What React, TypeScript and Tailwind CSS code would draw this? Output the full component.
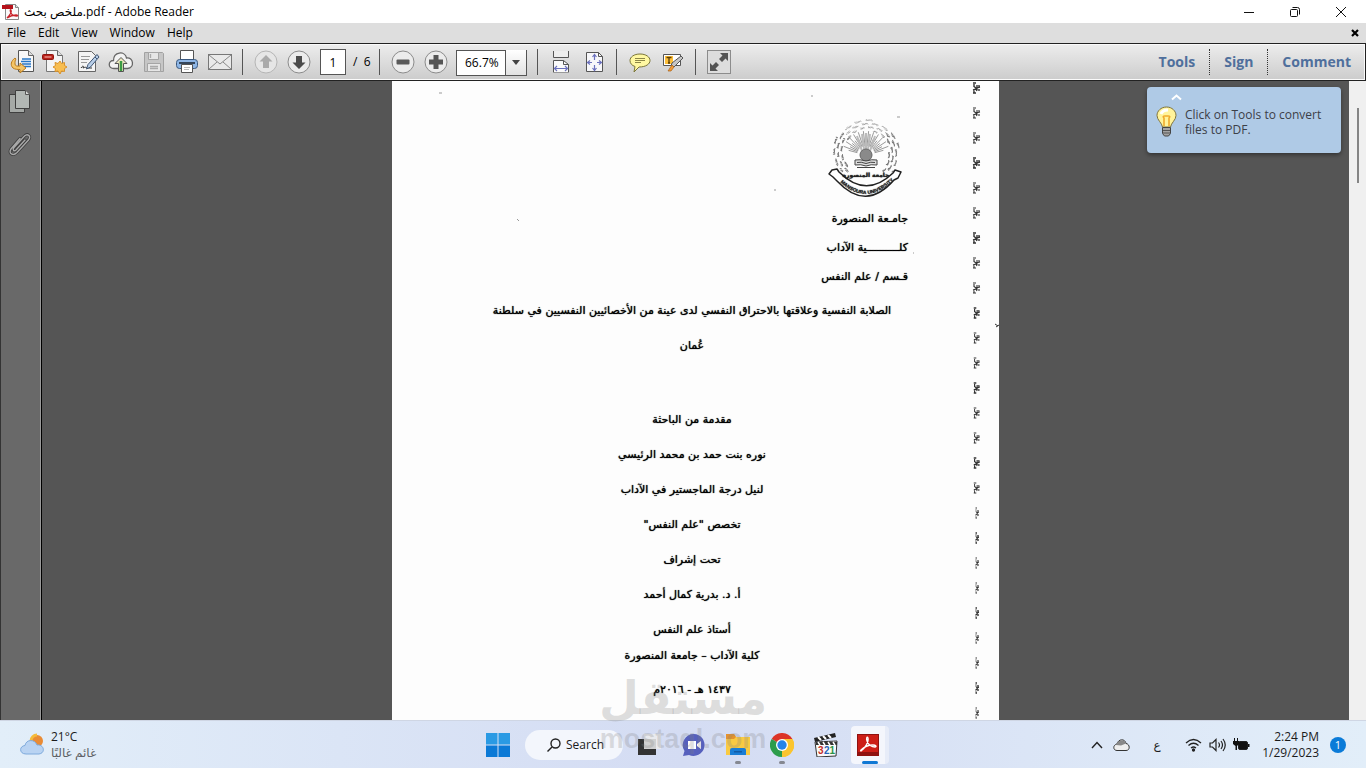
import type { ReactNode } from "react";

const UI = "font-['Open_Sans','DejaVu_Sans',sans-serif]";

function Sep() {
  return <span className="mx-[6px] h-[26px] w-px shrink-0 bg-[#555]" />;
}

function Tool({ label, children }: { label: string; children: ReactNode }) {
  return (
    <button type="button" aria-label={label} className="flex h-[30px] w-[33px] shrink-0 items-center justify-center">
      <svg width="26" height="26" viewBox="0 0 26 26" fill="none" aria-hidden="true">
        {children}
      </svg>
    </button>
  );
}

function PdfIcon() {
  return (
    <svg width="18" height="18" viewBox="0 0 18 18" aria-hidden="true">
      <path d="M3.5 1.5h10l3 3v12h-13z" fill="#fafafa" stroke="#888" />
      <path d="M13.5 1.5v3h3" fill="#ddd" stroke="#888" />
      <path d="M0 2h11v4H0z" fill="#b5121b" />
      <path d="M5 15c3-3 5-6 4-8-1-1-1 1 0 3 1 2 3 3 6 3 1 0 1-1-1-1-3 0-6 1-9 3z" fill="none" stroke="#c8232a" strokeWidth="1.3" />
    </svg>
  );
}

function TitleBar() {
  return (
    <header className="flex h-[23px] shrink-0 items-center justify-between bg-white pr-[2px] pl-[2px] text-[12px] text-black">
      <div className="flex items-center gap-[4px]">
        <PdfIcon />
        <h1 className="whitespace-nowrap">ملخص بحث.pdf - Adobe Reader</h1>
      </div>
      <div className="flex">
        <button type="button" aria-label="Minimize" className="flex h-[21px] w-[46px] items-center justify-center">
          <svg width="12" height="12" viewBox="0 0 12 12"><path d="M1 6.5h10" stroke="#111" /></svg>
        </button>
        <button type="button" aria-label="Restore" className="flex h-[21px] w-[46px] items-center justify-center">
          <svg width="12" height="12" viewBox="0 0 12 12" fill="none" stroke="#111">
            <rect x="1.5" y="3.5" width="7" height="7" rx="1" />
            <path d="M3.5 1.5h5a2 2 0 0 1 2 2v5" />
          </svg>
        </button>
        <button type="button" aria-label="Close" className="flex h-[21px] w-[46px] items-center justify-center">
          <svg width="12" height="12" viewBox="0 0 12 12"><path d="M1 1l10 10M11 1L1 11" stroke="#111" /></svg>
        </button>
      </div>
    </header>
  );
}

function MenuBar() {
  return (
    <nav className="flex h-[20px] shrink-0 items-center justify-between bg-[#dedede] pr-[6px] text-[12px] text-black">
      <div className="flex items-center pl-px">
        {["File", "Edit", "View", "Window", "Help"].map((m) => (
          <button key={m} type="button" className="px-[6px] leading-[20px]">{m}</button>
        ))}
      </div>
      <button type="button" aria-label="Close document" className="flex h-[16px] w-[10px] items-center justify-center">
        <svg width="8" height="8" viewBox="0 0 8 8"><path d="M1 1l6 6M7 1L1 7" stroke="#000" strokeWidth="2.2" /></svg>
      </button>
    </nav>
  );
}

function Toolbar() {
  return (
    <div className="flex h-[38px] shrink-0 items-center justify-between border border-[#222] border-b-[#222] bg-gradient-to-b from-[#ededed] to-[#cccccc] shadow-[inset_0_0_0_1px_#fafafa]">
      <div className="flex items-center pl-[4px]">
        <Tool label="Open">
          <path d="M9.500 1.500h10l5 5v16h-15z" fill="#f8f8f8" stroke="#555" />
          <path d="M19.500 1.500v5h5" fill="#ddd" stroke="#666" />
          <path d="M13 10h9M12 12.500h10M13 15h9M14 17.500h8" stroke="#2877c6" strokeWidth="1.400" />
          <path d="M6 9c-4 3-5 7-2 10 2 1.500 5 1.500 7 1.500V24l6-5-6-5v3c-3 .3-5 0-5-2 0-2 0-4 1-5z" fill="#f5c566" stroke="#bb7b1e" />
        </Tool>
        <Tool label="Create PDF">
          <path d="M4.500 1.500h11l5 5v16h-16z" fill="#f4f4f4" stroke="#777" />
          <path d="M15.500 1.500v5h5" fill="#ddd" stroke="#666" />
          <rect x="0.500" y="5.500" width="11" height="5" rx="1" fill="#b92019" stroke="#8e1610" />
          <path d="M2.500 8h7" stroke="#f3a9a0" strokeWidth="1.200" />
          <path d="M18 12l1.500 2.500 3-1 0 3 2.500 1.500-2.500 1.500 0 3-3-.5L18 25l-2-3-3 .5.500-3-2.500-1.500 2.500-1.500-.5-3 3 1z" fill="#f8bd4f" stroke="#d9922a" />
        </Tool>
        <Tool label="Fill and sign">
          <path d="M3.500 2.500h13l4 4v16h-17z" fill="#f4f4f4" stroke="#666" />
          <path d="M6 7.500h9M6 10.500h8M6 13.500h6" stroke="#999" strokeWidth="1.200" />
          <path d="M6 19c2-3 3-2 2 0 2-1 3-1 4 0h5" stroke="#333" />
          <path d="M22 5.500l2 2.500L15.500 18l-4 2 1.500-4.500z" fill="#b8cee8" stroke="#3f5573" />
          <path d="M20 8l2 2" stroke="#3f5573" />
        </Tool>
        <Tool label="Upload">
          <path d="M6 19.500C-.5 19.500 0 11.500 5.500 11.500 5.500 2.500 17 1.500 18.500 9c7-1 8.500 9.500 1 10.500z" fill="#f3f3f3" stroke="#666" strokeWidth="1.300" />
          <path d="M13 8.500l6 6h-3.500v8h-5v-8H7z" fill="#eee8c0" stroke="#555" />
          <path d="M13 12v10" stroke="#3b9b43" strokeWidth="2.500" />
        </Tool>
        <Tool label="Save">
          <path d="M3.500 3.500h18l1 1v18h-19z" fill="#c6c6c6" stroke="#a2a2a2" />
          <path d="M7.500 3.500h10v7h-10zM6.500 14.500h13v8h-13z" fill="#e6e6e6" stroke="#a5a5a5" />
          <path d="M9.500 5v4M9 17.500h8M9 19.500h8" stroke="#aaa" strokeWidth="1.300" />
        </Tool>
        <Tool label="Print">
          <path d="M6.500 1.500h13v10h-13z" fill="#fff" stroke="#555" />
          <rect x="2.500" y="10.500" width="21" height="9" rx="3" fill="#8eb6e6" stroke="#39587f" />
          <path d="M5 14h16" stroke="#35465b" strokeWidth="2" />
          <path d="M7.500 15.500h11v8h-11z" fill="#fff" stroke="#555" />
          <path d="M10 18.500h6M10 20.500h5" stroke="#bbb" />
        </Tool>
        <Tool label="Email">
          <rect x="1.500" y="5.500" width="23" height="15" fill="#e9e9e9" stroke="#777" />
          <path d="M2 6l11 9L24 6M2 20l8-7M24 20l-8-7" stroke="#888" />
        </Tool>
        <Sep />
        <Tool label="Previous page">
          <circle cx="13" cy="13" r="11" fill="#e6e6e6" stroke="#b5b5b5" />
          <path d="M13 6l6.500 6.500H16V19h-6v-6.500H6.500z" fill="#aaa" />
        </Tool>
        <Tool label="Next page">
          <circle cx="13" cy="13" r="11" fill="#ececec" stroke="#8b8b8b" />
          <path d="M13 20l6.500-6.500H16V7h-6v6.500H6.500z" fill="#4c4c4c" />
        </Tool>
        <input aria-label="Page number" defaultValue="1" className="ml-[5px] h-[26px] w-[26px] shrink-0 border border-[#555] bg-white text-center text-[12px] text-black" />
        <span className="w-[27px] shrink-0 pl-[7px] text-[12px] whitespace-pre text-black">/  6</span>
        <Sep />
        <Tool label="Zoom out">
          <circle cx="13" cy="13" r="11" fill="#ececec" stroke="#8b8b8b" />
          <rect x="6.500" y="10.500" width="13" height="5" rx="1" fill="#5a5a5a" />
        </Tool>
        <Tool label="Zoom in">
          <circle cx="13" cy="13" r="11" fill="#ececec" stroke="#8b8b8b" />
          <path d="M10.500 6h5v4.500H20v5h-4.500V20h-5v-4.500H6v-5h4.500z" fill="#555" />
        </Tool>
        <div className="relative mr-[4px] ml-[4px] shrink-0">
          <select aria-label="Zoom" className="h-[26px] w-[71px] appearance-none border border-[#555] bg-white pl-[8px] text-[12px] text-black">
            <option>66.7%</option>
            <option>100%</option>
          </select>
          <span className="pointer-events-none absolute inset-y-px right-px flex w-[21px] items-center justify-center border-l border-[#555] bg-gradient-to-b from-white to-[#e2e2e2]">
            <svg width="8" height="5" viewBox="0 0 8 5"><path d="M0 0h8L4 5z" fill="#444" /></svg>
          </span>
        </div>
        <Sep />
        <Tool label="Fit width">
          <path d="M5.500 2v6.500h15V2" fill="#eee" stroke="#555" />
          <path d="M5.500 23V11.500h10l5 4V23" fill="#fafafa" stroke="#555" />
          <path d="M15.500 11.500v4h5" stroke="#555" />
          <path d="M6.500 19.500h13M9 17l-2.500 2.500L9 22M17 17l2.500 2.500L17 22" stroke="#6b71bd" strokeWidth="1.200" />
          <path d="M5 23.500h16" stroke="#999" />
        </Tool>
        <Tool label="Fit page">
          <path d="M5.500 3.500h12l4 4v15h-16z" fill="#f7f7fa" stroke="#555" />
          <path d="M17.500 3.500v4h4" stroke="#555" />
          <path d="M7 13.500h4M16 13.500h4M13.500 6v5M13.500 16v5M9 11.500l-2.500 2L9 15.500M18 11.500l2.500 2-2.500 2M11.500 8l2-2.500 2 2.500M11.500 19l2 2.500 2-2.500" stroke="#6b71bd" strokeWidth="1.200" />
        </Tool>
        <Sep />
        <Tool label="Add note">
          <path d="M13 5c6 0 10 3 10 6.500S19 18 12 18l-5 5 1-5.500c-3-1-5-3-5-6C3 8 7 5 13 5z" fill="#fff8a2" stroke="#7b7637" />
          <path d="M8 9.500h10M8 11.500h10M8 13.500h6" stroke="#8c8648" />
        </Tool>
        <Tool label="Highlight text">
          <path d="M3.500 5.500h17v11h-17z" fill="#fff" stroke="#555" />
          <path d="M5 7h8v8H5z" fill="#fcbf3b" />
          <path d="M6.500 8.500h5M9 8.500v5.500M8 14h2" stroke="#5c3d05" strokeWidth="1.300" />
          <path d="M21 7l2 2-9 9-3-1 1-3z" fill="#c6c6c6" stroke="#555" />
          <path d="M12 16l2 2-3 4H8z" fill="#f29b36" stroke="#a96014" strokeWidth=".7" />
        </Tool>
        <Sep />
        <Tool label="Read mode">
          <rect x="1.500" y="1.500" width="23" height="23" fill="#ddd" stroke="#8c8c8c" />
          <path d="M22 4v8l-2.500-2.500-3.500 3.500-3-3 3.500-3.500L14 4zM4 22v-8l2.500 2.500L10 13l3 3-3.500 3.500L12 22z" fill="#555" />
        </Tool>
      </div>
      <div className="flex items-center text-[14px] font-bold text-[#4f6f9c] [text-shadow:0_1px_0_#fff]">
        <button type="button" className="px-[14px] leading-[26px]">Tools</button>
        <button type="button" className="border-l border-dotted border-[#333] px-[14px] leading-[26px]">Sign</button>
        <button type="button" className="border-l border-dotted border-[#333] px-[14px] leading-[26px]">Comment</button>
      </div>
    </div>
  );
}

function SidePanel() {
  return (
    <aside className="flex w-[42px] shrink-0 flex-col items-center gap-[17px] border-r border-l border-r-black border-l-[#333] bg-[#696969] pt-[8px] shadow-[inset_-1px_0_0_#999]">
      <button type="button" aria-label="Page thumbnails" className="pr-[3px]">
        <svg width="24" height="26" viewBox="0 0 24 26">
          <path d="M1.500 5.500h15v18h-15z" fill="#a5a9a6" stroke="#3f3f3f" />
          <path d="M7.500 1.500h10l4 4v14h-14z" fill="#b2b7b4" stroke="#3f3f3f" />
          <path d="M17.500 1.500v4h4" fill="#d7d9d8" stroke="#555" />
        </svg>
      </button>
      <button type="button" aria-label="Attachments" className="pr-[3px]">
        <svg width="24" height="26" viewBox="0 0 24 26" fill="none" strokeLinecap="round">
          <path d="M17 8l-9 10c-2 2-4 0-2-2.500L16.500 4c3-3 7 0 4 4L9 20.500c-4 4-9 1-6-3.500L12 6.500" stroke="#3b3b3b" strokeWidth="3" />
          <path d="M17 8l-9 10c-2 2-4 0-2-2.500L16.500 4c3-3 7 0 4 4L9 20.500c-4 4-9 1-6-3.500L12 6.500" stroke="#a9a9a9" strokeWidth="1.400" />
        </svg>
      </button>
    </aside>
  );
}

const leaves = Array.from({ length: 260 }, (_, i) => {
  const a = ((i * 137.5) % 360) * (Math.PI / 180);
  const r = 23 + ((i * 7) % 11);
  return { x: 39 + Math.cos(a) * r, y: 36 + Math.sin(a) * r, d: (i * 53) % 180, w: Math.sin(a) < -0.7 ? 0.5 : 1 };
}).filter((l) => l.y < 55);

const rays = Array.from({ length: 25 }, (_, i) => {
  const a = (-165 + i * 6.25) * (Math.PI / 180);
  const len = i % 2 ? 24 : 18;
  return { x1: 39 + Math.cos(a) * 9, y1: 38 + Math.sin(a) * 9, x2: 39 + Math.cos(a) * len, y2: 38 + Math.sin(a) * len };
});

function Emblem() {
  return (
    <svg width="78" height="84" viewBox="0 0 78 84" role="img" aria-label="Mansoura University">
      <defs>
        <path id="ribbon-line" d="M10 62Q39 93 70 60" />
      </defs>
      {leaves.map((l, i) => (
        <path key={i} d={`M${l.x - 1} ${l.y}q1 -1 2 0`} transform={`rotate(${l.d} ${l.x} ${l.y})`} stroke="#777" strokeWidth={l.w} fill="none" />
      ))}
      {rays.map((r, i) => (
        <path key={i} d={`M${r.x1} ${r.y1}L${r.x2} ${r.y2}`} stroke="#999" strokeWidth="1" />
      ))}
      <path d="M30 19l5 15M48 19l-5 15M35 17l2 15M43 17l-2 15M39 16v16" stroke="#bbb" strokeWidth="2" />
      <circle cx="39" cy="38" r="6" fill="#8a8a8a" stroke="#666" />
      <path d="M28 43q5-1 11 1 6-2 11-1v5q-6-1-11 1-5-2-11-1z" fill="#ddd" stroke="#444" />
      <path d="M30 45.500q4-1 9 1 5-2 9-1M30 50.500h18" stroke="#444" fill="none" />
      <path d="M5 53l5-1 2 3Q39 82 66 56l2-3 6 2-3 6-4 2Q39 95 10 64l-4-4-4-3z" fill="#fff" stroke="#222" strokeWidth="1.500" strokeLinejoin="round" />
      <text className="font-['Liberation_Sans',sans-serif] text-[5px] font-bold" fill="#222">
        <textPath href="#ribbon-line" startOffset="50%" textAnchor="middle">MANSOURA UNIVERSITY</textPath>
      </text>
      <text x="39" y="60" textAnchor="middle" className="font-['DejaVu_Sans',sans-serif] text-[6px] font-bold" fill="#222">جامعة المنصورة</text>
    </svg>
  );
}

function Binding() {
  return (
    <svg className="absolute top-0 right-[16px]" width="14" height="639" viewBox="0 0 14 639" fill="none" aria-hidden="true">
      {Array.from({ length: 26 }, (_, i) => {
        const y = 7 + i * 25;
        const s = i < 9 ? 1 : i < 17 ? 0.85 : 0.5;
        return (
          <g key={i} stroke="#333" transform={`translate(${4 + (1 - s) * 5} ${y}) scale(${s} 1)`}>
            <path d="M0-5l3 0M1-4v3M4-3v5M6-3v2M1-1.500l2 1.500 4-1M0 2l3-1 1 2M1 1v4M6 1v2M0 5l3 0" strokeWidth={i % 3 ? 1.1 : 1.4} />
          </g>
        );
      })}
    </svg>
  );
}

const lines = [
  { t: "مقدمة من الباحثة", c: "h-[35px]" },
  { t: "نوره بنت حمد بن محمد الرئيسي", c: "h-[35px]" },
  { t: "لنيل درجة الماجستير في الآداب", c: "h-[35px]" },
  { t: "تخصص \"علم النفس\"", c: "h-[35px]" },
  { t: "تحت إشراف", c: "h-[35px]" },
  { t: "أ. د. بدرية كمال أحمد", c: "h-[35px]" },
  { t: "أستاذ علم النفس", c: "h-[35px]" },
  { t: "كلية الآداب – جامعة المنصورة", c: "h-[17px]" },
  { t: "١٤٣٧ هـ - ٢٠١٦م", c: "h-[35px] mt-[8px]" },
];

function DocumentPage() {
  return (
    <article dir="rtl" className="relative w-[607px] shrink-0 bg-[#fdfdfd] pt-[36px] pr-[91px] pl-[84px] font-['DejaVu_Sans',sans-serif] text-[11px] text-black [text-shadow:0_0_1px_#000]">
      <div className="flex w-[84px] flex-col items-center">
        <Emblem />
      </div>
      <div className="pt-[3px]">
        <p className="h-[29px] leading-[29px] whitespace-nowrap">جامـعة المنصورة</p>
        <p className="h-[29px] leading-[29px] whitespace-nowrap">كلــــــــــية الآداب</p>
        <p className="h-[29px] leading-[29px] whitespace-nowrap">قـسم / علم النفس</p>
      </div>
      <h2 className="flex flex-col items-center pt-[2px] text-center leading-[35px]">
        <span className="whitespace-nowrap">الصلابة النفسية وعلاقتها بالاحتراق النفسي لدى عينة من الأخصائيين النفسيين في سلطنة</span>
        <span>عُمان</span>
      </h2>
      <div className="pt-[40px] text-center">
        {lines.map((l) => (
          <p key={l.t} className={`flex items-center justify-center whitespace-nowrap ${l.c}`}>{l.t}</p>
        ))}
      </div>
      <Binding />
      <svg className="absolute top-0 left-0" width="607" height="260" viewBox="0 0 607 260" fill="none" aria-hidden="true">
        <path d="M47 12h3M125 138l2 2M505 36h3M419 15h2M521 172h1M382 109h2" stroke="#999" />
        <path d="M603 243l3 2M604 246l3-2" stroke="#333" />
      </svg>
    </article>
  );
}

function Tip() {
  return (
    <div role="status" className="absolute top-[6px] right-[25px] flex h-[66px] w-[194px] items-center gap-[8px] rounded-[4px] bg-[#afcae6] pt-[4px] pl-[9px] text-[12px] leading-[15px] text-[#3c4048] shadow-[0_2px_4px_rgba(0,0,0,0.4)]">
      <svg className="absolute top-[6px] left-[24px]" width="11" height="8" viewBox="0 0 11 8"><path d="M1 6.500l4.500-4 4.500 4" stroke="#fff" strokeWidth="2" fill="none" /></svg>
      <svg width="21" height="32" viewBox="0 0 21 32" className="shrink-0">
        <path d="M10.500 1C5 1 1 5 1 9.500 1 14 6 17 6.500 21h8C15 17 20 14 20 9.500 20 5 16 1 10.500 1z" fill="#fff39b" stroke="#80743a" />
        <path d="M5 8c1-3 4-4 7-4" stroke="#fff" strokeWidth="3" fill="none" />
        <path d="M8 20v-8q-2-2 1-2h3q3 0 1 2v8" fill="none" stroke="#efaa2c" strokeWidth="1.600" />
        <path d="M6.500 21.500h8v6l-2 2.500h-4l-2-2.500z" fill="#a3a3a3" stroke="#444" />
        <path d="M7 24.500h7M7 27h7" stroke="#555" />
      </svg>
      <p className="w-[140px]">Click on Tools to convert files to PDF.</p>
    </div>
  );
}

function TaskIcon({ label, children, running = false }: { label: string; children: ReactNode; running?: boolean }) {
  return (
    <button type="button" aria-label={label} className="relative flex h-[48px] w-[44px] shrink-0 items-center justify-center">
      <svg width="24" height="24" viewBox="0 0 24 24" aria-hidden="true">{children}</svg>
      {running && <span className="absolute bottom-[5px] h-[3px] w-[6px] rounded-full bg-[#858891]" />}
    </button>
  );
}

function Taskbar() {
  return (
    <footer className="grid h-[48px] shrink-0 grid-cols-[1fr_auto_1fr] items-center border-t border-[#cfd6e4] bg-gradient-to-r from-[#e2eef9] via-[#d4dcf3] to-[#e2eef9] text-[12px] text-[#1b1b1b]">
      <div className="flex items-center gap-[7px] pl-[20px]">
        <svg width="24" height="24" viewBox="0 0 24 24" aria-hidden="true">
          <circle cx="17" cy="8" r="6" fill="#e98b35" />
          <path d="M11 8a6 6 0 0 1 6-6" stroke="#f5bb3b" strokeWidth="3" fill="none" />
          <path d="M6 21c-7 0-7-8-1-8.500C6 6 15 6 17 12c7-1 9 8 2 9z" fill="#b9d3f2" stroke="#7eaadc" />
        </svg>
        <div className="leading-[16px]">
          <p>21°C</p>
          <p lang="ar" className="text-[#5c5f63]">غائم غالبًا</p>
        </div>
      </div>
      <div className="flex items-center pl-[2px]">
        <TaskIcon label="Start">
          <path d="M0 0h11.500v11.500H0zM12.500 0H24v11.500H12.500z" fill="#2a9ae4" />
          <path d="M0 12.500h11.500V24H0zM12.500 12.500H24V24H12.500z" fill="#0b79d6" />
        </TaskIcon>
        <button type="button" className="mx-[5px] flex h-[30px] w-[98px] items-center gap-[5px] rounded-full bg-[#f3f6fc] pl-[22px]">
          <svg width="14" height="14" viewBox="0 0 14 14" fill="none" stroke="#222" strokeWidth="1.400"><circle cx="8.500" cy="5.500" r="4.500" /><path d="M5 9l-4.500 4.500" /></svg>
          Search
        </button>
        <TaskIcon label="Task view">
          <path d="M0 6h18v16H0z" fill="#333" />
          <path d="M6 1h17v15H6z" fill="#ececec" opacity=".85" />
        </TaskIcon>
        <TaskIcon label="Chat">
          <path d="M12 1a11 11 0 1 1-5 21l-6 1 1.500-5A11 11 0 0 1 12 1z" fill="#5660bd" />
          <path d="M6 8h8v8H6zM15 11l4-3v8l-4-3z" fill="#fff" />
        </TaskIcon>
        <TaskIcon label="File Explorer" running>
          <path d="M0 1h8l2 3h14v18H0z" fill="#f9ca42" />
          <path d="M0 1h8l2 3-2 2H0z" fill="#e4922d" />
          <path d="M4 22v-5q0-2 2-2h12q2 0 2 2v5z" fill="#1a7dd5" />
          <path d="M8 18h8v1.500H8z" fill="#125ba5" />
        </TaskIcon>
        <TaskIcon label="Google Chrome" running>
          <path d="M12 12L1.600 6a12 12 0 0 1 20.800 0z" fill="#dc3427" />
          <path d="M12 12L22.400 6A12 12 0 0 1 12 24z" fill="#fbc52f" />
          <path d="M12 12v12A12 12 0 0 1 1.600 6z" fill="#2c9c4b" />
          <path d="M12 6h10.400A12 12 0 0 1 12 24l5.200-9z" fill="#fbc52f" />
          <circle cx="12" cy="12" r="6" fill="#fff" />
          <circle cx="12" cy="12" r="4.700" fill="#2684e8" />
        </TaskIcon>
        <TaskIcon label="Media Player Classic">
          <path d="M1 9l22-1-1 15-19 1z" fill="#fafafa" stroke="#333" />
          <path d="M0 5l21-5 1 4L1 9z" fill="#222" />
          <path d="M4 4l3 3M9 3l3 3M14 2l3 3" stroke="#fff" strokeWidth="2" />
          <path d="M2 9h21v3H2z" fill="#333" />
          <path d="M4 9l2 3M9 9l2 3M14 9l2 3M19 9l2 3" stroke="#fff" strokeWidth="1.500" />
          <g className="font-['Liberation_Sans',sans-serif] text-[10px] font-bold">
            <text x="4" y="21" fill="#c62d26">3</text>
            <text x="10" y="21" fill="#2664b8">2</text>
            <text x="15.500" y="21" fill="#2b9446">1</text>
          </g>
        </TaskIcon>
        <button type="button" aria-label="Adobe Reader" className="relative flex h-[48px] w-[44px] items-center justify-center">
          <span className="flex h-[38px] w-[38px] items-center justify-center rounded-[4px] border-r-4 border-[#e7ecf8] bg-[#f4f6fc]">
            <svg width="22" height="22" viewBox="0 0 22 22" aria-hidden="true">
              <path d="M0 0h22v22H0z" fill="#8f1210" />
              <path d="M1 1h20v17H1z" fill="#cc1e17" />
              <path d="M4 17c4-3 8-9 7-13-1-2-2 0-1 3 1 4 5 6 8 6 2 0 1-2-2-2-4 0-9 2-12 5-1 1 0 1 0 1z" fill="none" stroke="#fff" strokeWidth="1.300" />
            </svg>
          </span>
          <span className="absolute bottom-[5px] h-[3px] w-[16px] rounded-full bg-[#0f78d4]" />
        </button>
      </div>
      <div className="flex items-center justify-end pr-[20px]">
        <button type="button" aria-label="Show hidden icons" className="mr-[10px]">
          <svg width="12" height="8" viewBox="0 0 12 8" fill="none" stroke="#222" strokeWidth="1.400"><path d="M1 7l5-5.500L11 7" /></svg>
        </button>
        <button type="button" aria-label="OneDrive" className="mr-[22px]">
          <svg width="17" height="12" viewBox="0 0 17 12"><path d="M4 11.500C0 11.500-.5 6 4 5c1-5 8-6 9-.5 4 .5 4.500 7 0 7z" fill="#eee" stroke="#333" /><path d="M3 6c2-6 9-6 10-1.500l-5 2z" fill="#888" /></svg>
        </button>
        <button type="button" lang="ar" aria-label="Arabic keyboard" className="mr-[23px] w-[10px]">ع</button>
        <button type="button" aria-label="Network, volume and battery" className="mr-[12px] flex items-center gap-[7px]">
          <svg width="17" height="14" viewBox="0 0 17 14" fill="none" stroke="#222" strokeWidth="1.300"><path d="M1 5q7.500-7 15 0M3.500 7.500q5-4.500 10 0M6 10q2.500-2 5 0" /><circle cx="8.500" cy="12" r="1" fill="#222" /></svg>
          <svg width="17" height="14" viewBox="0 0 17 14" fill="none" stroke="#222" strokeWidth="1.200"><path d="M1 5h2.500L7 1.500v11L3.500 9H1zM9.500 4.500q2 2.500 0 5M12 3q3 4 0 8M14 1q4.500 6 0 12" /></svg>
          <svg width="17" height="14" viewBox="0 0 17 14"><rect x="5.500" y="3.500" width="9" height="8" rx="1.500" fill="#111" stroke="#222" /><path d="M15 6h1.500v3H15zM0 3h6v3L4 8v4H2.500V8L0 6zM1 0h1v3H1zM4 0h1v3H4z" fill="#111" /></svg>
        </button>
        <button type="button" className="text-right leading-[16px]">
          <span className="block">2:24 PM</span>
          <span className="block">1/29/2023</span>
        </button>
        <span className="ml-[11px] flex h-[16px] w-[16px] items-center justify-center rounded-full bg-[#0b7bd8] text-[11px] leading-[16px] text-white">1</span>
      </div>
    </footer>
  );
}

export default function App() {
  return (
    <div className={`relative flex h-screen flex-col overflow-hidden bg-[#555] ${UI}`}>
      <TitleBar />
      <MenuBar />
      <Toolbar />
      <main className="flex min-h-0 flex-1">
        <SidePanel />
        <section className="relative flex min-w-0 flex-1 overflow-hidden bg-[#555]">
          <div className="flex min-w-0 flex-1 justify-center">
            <DocumentPage />
          </div>
          <div className="w-[17px] shrink-0 bg-[#f0f0f0] pt-[27px] pl-[8px]">
            <div className="h-[75px] w-[2px] bg-[#858585]" />
          </div>
          <Tip />
        </section>
      </main>
      <Taskbar />
      <div aria-hidden="true" className="pointer-events-none absolute bottom-[12px] left-1/2 flex -translate-x-1/2 flex-col items-center font-bold text-[#808080]/25">
        <span className="font-['DejaVu_Sans',sans-serif] text-[46px] leading-[48px]">مستقل</span>
        <span className="font-['Liberation_Sans',sans-serif] text-[27px] leading-[34px]">mostaql.com</span>
      </div>
    </div>
  );
}
